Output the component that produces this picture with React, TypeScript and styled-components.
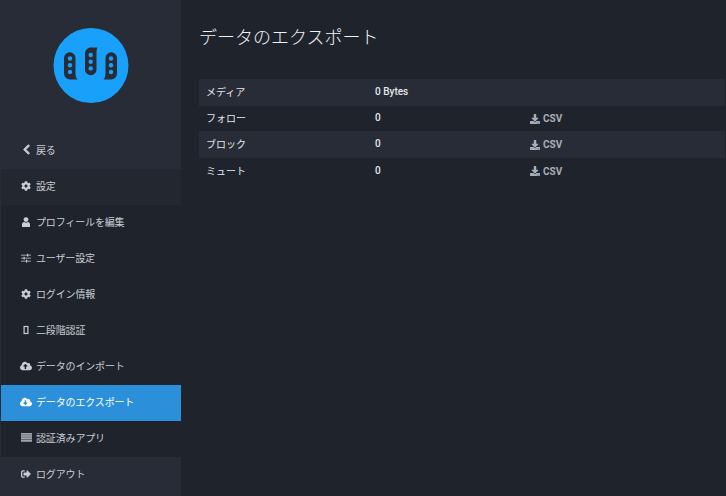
import React from "react";
import styled, { createGlobalStyle } from "styled-components";
import { FaChevronLeft, FaCog, FaSignOutAlt, FaDownload, FaCloudUploadAlt, FaCloudDownloadAlt } from "react-icons/fa";

const Global = createGlobalStyle`
  html, body { margin: 0; padding: 0; background: #1f232b; }
  body { font-family: Roboto, "Noto Sans CJK JP", sans-serif; overflow: hidden; }
`;

const Page = styled.div`
  display: flex;
  width: 726px;
  height: 496px;
  overflow: hidden;
  background: #1f232b;
`;

const Sidebar = styled.nav`
  width: 181px;
  flex: none;
  display: flex;
  flex-direction: column;
  background: #282c37;
`;

const LogoBox = styled.div`
  height: 133px;
  flex: none;
  display: flex;
  justify-content: center;
  align-items: flex-start;
  padding-top: 28px;
  box-sizing: border-box;
`;

const Item = styled.a<{ $variant?: "root" | "head" | "sub" | "active" }>`
  height: 36px;
  flex: none;
  display: flex;
  align-items: center;
  box-sizing: border-box;
  padding-left: ${(p) => (p.$variant === "root" ? 21 : 20)}px;
  padding-bottom: 3px;
  margin-left: ${(p) => (p.$variant === "root" ? 0 : 1)}px;
  font-size: 10px;
  letter-spacing: -0.15px;
  color: ${(p) => (p.$variant === "active" ? "#fff" : "#c9ced5")};
  background: ${(p) =>
    p.$variant === "active" ? "#2b90d9" : p.$variant === "head" ? "#23272f" : p.$variant === "sub" ? "#1f232b" : "transparent"};
`;

const IconSlot = styled.span`
  width: 10px;
  height: 10px;
  flex: none;
  display: flex;
  justify-content: center;
  align-items: center;
  margin-right: 5px;
  font-size: 10px;
  svg { flex: none; }
`;

const Main = styled.main`
  flex: 1;
  padding: 27px 0 0 18px;
  box-sizing: border-box;
`;

const Title = styled.h1`
  margin: 0 0 31px;
  font-size: 18px;
  line-height: 21px;
  font-weight: 300;
  color: #f0f3f5;
`;

const Table = styled.div`
  width: 526px;
  display: flex;
  flex-direction: column;
`;

const Row = styled.div<{ $odd?: boolean; $height: number }>`
  display: grid;
  grid-template-columns: 170px 160px 1fr;
  align-items: center;
  height: ${(p) => p.$height}px;
  padding-bottom: 2px;
  box-sizing: border-box;
  background: ${(p) => (p.$odd ? "#282c37" : "transparent")};
  font-size: 10px;
  color: #d9e1e8;
`;

const Label = styled.span`
  padding-left: 7px;
  font-size: 10px;
  color: #e4e8ec;
`;

const Value = styled.span`
  padding-left: 6px;
  color: #e4e8ec;
  font-weight: 500;
`;

const Csv = styled.a`
  display: flex;
  align-items: center;
  gap: 3px;
  margin-top: 2px;
  padding-left: 1px;
  color: #a8aeb8;
  font-weight: 700;
`;

const Logo = () => (
  <svg width="76" height="76" viewBox="0 0 76 76">
    <circle cx="38" cy="37.500" r="37.500" fill="#19a0fb" />
    <path d="M11 30a5.750 5.750 0 0 1 11.500 0v15c0 3 .5 5 2 6.500H17a6 6 0 0 1-6-6z" fill="#282c37" />
    <path d="M32 26c0-4 2.500-6.500 6.500-6.500h6c-1 2-1 4-1 6.500v15.500a5.750 5.750 0 0 1-11.500 0z" fill="#282c37" />
    <path d="M64 30a5.750 5.750 0 0 0-11.500 0v15c0 3-.5 5-2 6.500H58a6 6 0 0 0 6-6z" fill="#282c37" />
    <g fill="#19a0fb">
      <circle cx="17" cy="30.500" r="2.200" /><circle cx="17" cy="37.200" r="2.200" /><circle cx="17" cy="44" r="2.200" />
      <circle cx="37.700" cy="27" r="2.200" /><circle cx="37.700" cy="33.700" r="2.200" /><circle cx="37.700" cy="40.400" r="2.200" />
      <circle cx="58" cy="30.500" r="2.200" /><circle cx="58" cy="37.200" r="2.200" /><circle cx="58" cy="44" r="2.200" />
    </g>
  </svg>
);

const UserIcon = () => (
  <svg width="10" height="10" viewBox="0 0 10 10" fill="currentColor">
    <circle cx="5" cy="2.600" r="2.400" />
    <path d="M1 10V7.500C1 5.800 2.200 5 3.300 5 3.800 5.500 4.400 5.700 5 5.700s1.200-.2 1.700-.7C7.800 5 9 5.800 9 7.500V10z" />
  </svg>
);

const SlidersIcon = () => (
  <svg width="10" height="10" viewBox="0 0 10 10" fill="currentColor">
    <path d="M0 1.700h10v.8H0zM0 4.700h10v.8H0zM0 7.700h10v.8H0z" />
    <path d="M6 .8h1.200v2.600H6zM2.500 3.800h1.200v2.600H2.500zM5 6.800h1.200v2.600H5z" />
  </svg>
);

const MobileIcon = () => (
  <svg width="10" height="10" viewBox="0 0 10 10">
    <rect x="3.100" y="1.500" width="3.800" height="7" fill="none" stroke="currentColor" strokeWidth="1.200" />
  </svg>
);

const ListIcon = () => (
  <svg width="11" height="11" viewBox="0 0 11 11" fill="currentColor" opacity="0.75">
    <path d="M0 1h11v9H0z" opacity="0.55" />
    <path d="M0 1h11v1.500H0zM0 3.300h11v1.500H0zM0 5.600h11v1.500H0zM0 7.900h11v1.500H0z" />
  </svg>
);

const nav = [
  { label: "戻る", icon: <FaChevronLeft size={11} stroke="currentColor" strokeWidth={40} />, v: "root" },
  { label: "設定", icon: <FaCog />, v: "head" },
  { label: "プロフィールを編集", icon: <UserIcon />, v: "sub" },
  { label: "ユーザー設定", icon: <SlidersIcon />, v: "sub" },
  { label: "ログイン情報", icon: <FaCog />, v: "sub" },
  { label: "二段階認証", icon: <MobileIcon />, v: "sub" },
  { label: "データのインポート", icon: <FaCloudUploadAlt size={12} />, v: "sub" },
  { label: "データのエクスポート", icon: <FaCloudDownloadAlt size={12} />, v: "active" },
  { label: "認証済みアプリ", icon: <ListIcon />, v: "sub" },
  { label: "ログアウト", icon: <FaSignOutAlt />, v: "root" },
] as const;

const rows = [
  { label: "メディア", value: "0 Bytes", csv: false, height: 27 },
  { label: "フォロー", value: "0", csv: true, height: 25 },
  { label: "ブロック", value: "0", csv: true, height: 27 },
  { label: "ミュート", value: "0", csv: true, height: 26 },
];

export default function App() {
  return (
    <Page>
      <Global />
      <Sidebar>
        <LogoBox><Logo /></LogoBox>
        {nav.map((n) => (
          <Item key={n.label} $variant={n.v}>
            <IconSlot>{n.icon}</IconSlot>
            {n.label}
          </Item>
        ))}
      </Sidebar>
      <Main>
        <Title>データのエクスポート</Title>
        <Table>
          {rows.map((r, i) => (
            <Row key={r.label} $odd={i % 2 === 0} $height={r.height}>
              <Label>{r.label}</Label>
              <Value>{r.value}</Value>
              {r.csv ? <Csv><FaDownload />CSV</Csv> : <span />}
            </Row>
          ))}
        </Table>
      </Main>
    </Page>
  );
}
